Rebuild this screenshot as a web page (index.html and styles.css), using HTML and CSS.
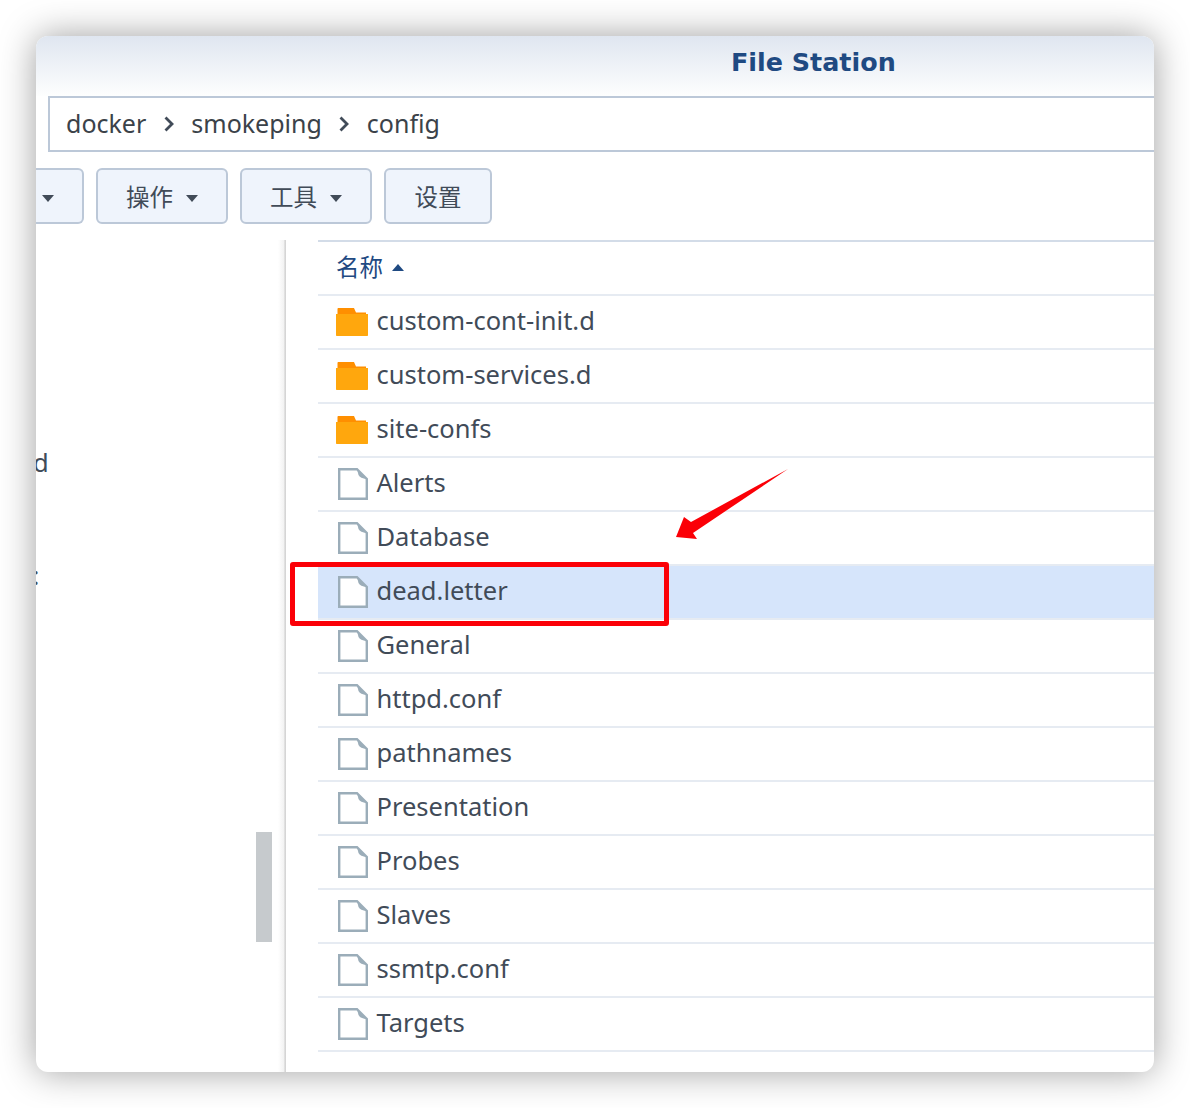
FILE: index.html
```html
<!DOCTYPE html>
<html lang="zh">
<head>
    <meta charset="UTF-8">
    <meta name="viewport" content="width=device-width, initial-scale=1.0">
    <title>File Station</title>
    <link rel="stylesheet" href="styles.css">
</head>
<body>
    <svg class="defs" width="0" height="0">
        <symbol id="file" viewBox="0 0 30 32">
            <path d="M1.2 1.2H19L28.8 11V30.8H1.2Z" fill="#fff" stroke="#9badb9" stroke-width="2.4"/>
            <path d="M19 1L29 11Q22 10.5 20.5 7Z" fill="#9badb9"/>
        </symbol>
        <symbol id="folder" viewBox="0 0 32 28">
            <path d="M1.5 1C1.5.4 2 0 2.5 0H18L20 4.5H30V6H1.5Z" fill="#ff8f00"/>
            <path d="M0 6H32V27C32 27.6 31.6 28 31 28H1C.4 28 0 27.6 0 27Z" fill="#ffa70d"/>
        </symbol>
    </svg>

    <div class="window">
        <div class="titlebar">File Station</div>
        <div class="pathbar">
            <span>docker</span>
            <svg class="crumb" width="12" height="16" viewBox="0 0 12 16"><path d="M2.5 1.5L9 8L2.5 14.5" fill="none" stroke="#414b58" stroke-width="2.8"/></svg>
            <span>smokeping</span>
            <svg class="crumb" width="12" height="16" viewBox="0 0 12 16"><path d="M2.5 1.5L9 8L2.5 14.5" fill="none" stroke="#414b58" stroke-width="2.8"/></svg>
            <span>config</span>
        </div>
        <div class="toolbar">
            <div class="btn btn-cut"><i class="caret"></i></div>
            <div class="btn btn-menu">操作<i class="caret"></i></div>
            <div class="btn btn-menu">工具<i class="caret"></i></div>
            <div class="btn btn-plain">设置</div>
        </div>
        <div class="main">
            <div class="tree">
                <div class="tree-item tree-d">d</div>
                <div class="tree-item tree-c">:</div>
                <div class="scrollbar"></div>
            </div>
            <div class="list">
                <div class="list-head">名称<i class="caret-up"></i></div>
                <div class="row"><svg class="ico-folder"><use href="#folder"/></svg>custom-cont-init.d</div>
                <div class="row"><svg class="ico-folder"><use href="#folder"/></svg>custom-services.d</div>
                <div class="row"><svg class="ico-folder"><use href="#folder"/></svg>site-confs</div>
                <div class="row"><svg class="ico-file"><use href="#file"/></svg>Alerts</div>
                <div class="row"><svg class="ico-file"><use href="#file"/></svg>Database</div>
                <div class="row selected"><svg class="ico-file"><use href="#file"/></svg>dead.letter</div>
                <div class="row"><svg class="ico-file"><use href="#file"/></svg>General</div>
                <div class="row"><svg class="ico-file"><use href="#file"/></svg>httpd.conf</div>
                <div class="row"><svg class="ico-file"><use href="#file"/></svg>pathnames</div>
                <div class="row"><svg class="ico-file"><use href="#file"/></svg>Presentation</div>
                <div class="row"><svg class="ico-file"><use href="#file"/></svg>Probes</div>
                <div class="row"><svg class="ico-file"><use href="#file"/></svg>Slaves</div>
                <div class="row"><svg class="ico-file"><use href="#file"/></svg>ssmtp.conf</div>
                <div class="row"><svg class="ico-file"><use href="#file"/></svg>Targets</div>
            </div>
        </div>
        <div class="redbox"></div>
        <svg class="arrow" width="114" height="74" viewBox="0 0 114 74">
            <path d="M112 1L15 54L8 49L0 69L21 71L17 65Z" fill="#fb0007"/>
        </svg>
    </div>
</body>
</html>
```

FILE: styles.css
```css
html, body {
    height: 1108px;
}
body {
    margin: 0;
    padding-top: 36px;
    box-sizing: border-box;
    background: #fff;
    font-family: "Noto Sans", "Noto Sans CJK SC", sans-serif;
    color: #414b58;
    overflow: hidden;
}
.defs {
    position: absolute;
}
.window {
    position: relative;
    width: 1118px;
    height: 1036px;
    margin-left: 36px;
    background: #fff;
    border-radius: 12px;
    box-shadow: 0 0 36px rgba(0,0,0,0.38);
    overflow: hidden;
}
.titlebar {
    height: 60px;
    padding-left: 695px;
    line-height: 53px;
    font-family: "DejaVu Sans", sans-serif;
    font-size: 25.4px;
    font-weight: bold;
    color: #1f4a82;
    background: linear-gradient(#dfe6f0, #fdfefe);
    box-sizing: border-box;
}
.pathbar {
    display: flex;
    align-items: center;
    height: 56px;
    margin-left: 12px;
    padding: 0 0 3px 16px;
    border: 2px solid #bcc8d8;
    border-right: none;
    box-sizing: border-box;
    font-size: 25px;
    color: #3b4249;
}
.crumb {
    margin: 3px 16.5px 0 16.5px;
}
.toolbar {
    display: flex;
    gap: 12px;
    height: 56px;
    margin-top: 16px;
}
.btn {
    display: flex;
    align-items: center;
    justify-content: center;
    height: 56px;
    box-sizing: border-box;
    border: 2px solid #bcc8d8;
    border-radius: 6px;
    background: #eff4fc;
    font-size: 23.5px;
}
.btn-cut {
    width: 48px;
    justify-content: flex-start;
    border-left: none;
    border-radius: 0 6px 6px 0;
}
.btn-cut .caret {
    margin-left: 6px;
}
.btn-menu {
    width: 132px;
}
.btn-plain {
    width: 108px;
}
.caret {
    width: 0;
    height: 0;
    margin: 4px 0 0 13px;
    border: 6px solid transparent;
    border-top: 7px solid #414b58;
    border-bottom: none;
}
.main {
    display: flex;
    margin-top: 16px;
}
.tree {
    position: relative;
    width: 250px;
    height: 832px;
    background: linear-gradient(to right, #fff, #f3f3f3 70%, #e6e6e6 75%, #d0d0d0) no-repeat right / 8px 100%;
}
.tree-item {
    font-size: 25.5px;
    line-height: 30px;
    white-space: nowrap;
}
.tree-d {
    margin: 207px 0 0 -3px;
}
.tree-c {
    margin: 83px 0 0 -3.5px;
}
.scrollbar {
    position: absolute;
    left: 220px;
    top: 592px;
    width: 16px;
    height: 110px;
    background: #c6cacd;
}
.list {
    flex: 1;
    margin-left: 32px;
}
.list-head {
    display: flex;
    align-items: center;
    height: 56px;
    padding: 0 0 4px 18px;
    border-top: 2px solid #d3dce8;
    border-bottom: 2px solid #e6ebf2;
    box-sizing: border-box;
    font-size: 23.5px;
    color: #1f4a82;
}
.caret-up {
    width: 0;
    height: 0;
    margin: 2px 0 0 9px;
    border: 6px solid transparent;
    border-bottom: 7px solid #1f4a82;
    border-top: none;
}
.row {
    display: flex;
    align-items: center;
    height: 54px;
    box-sizing: border-box;
    padding: 0 0 4px 18px;
    border-bottom: 2px solid #e6ebf2;
    font-size: 25.5px;
}
.row.selected {
    background: #d6e5fb;
}
.ico-folder {
    width: 32px;
    height: 28px;
    margin: 4px 8.5px 0 0;
}
.ico-file {
    width: 30px;
    height: 32px;
    margin: 4px 8.5px 0 2px;
}
.redbox {
    position: absolute;
    left: 254px;
    top: 526px;
    width: 379px;
    height: 64px;
    box-sizing: border-box;
    border: 5px solid #fb0007;
    border-radius: 3px;
}
.arrow {
    position: absolute;
    left: 640px;
    top: 432px;
}
```
